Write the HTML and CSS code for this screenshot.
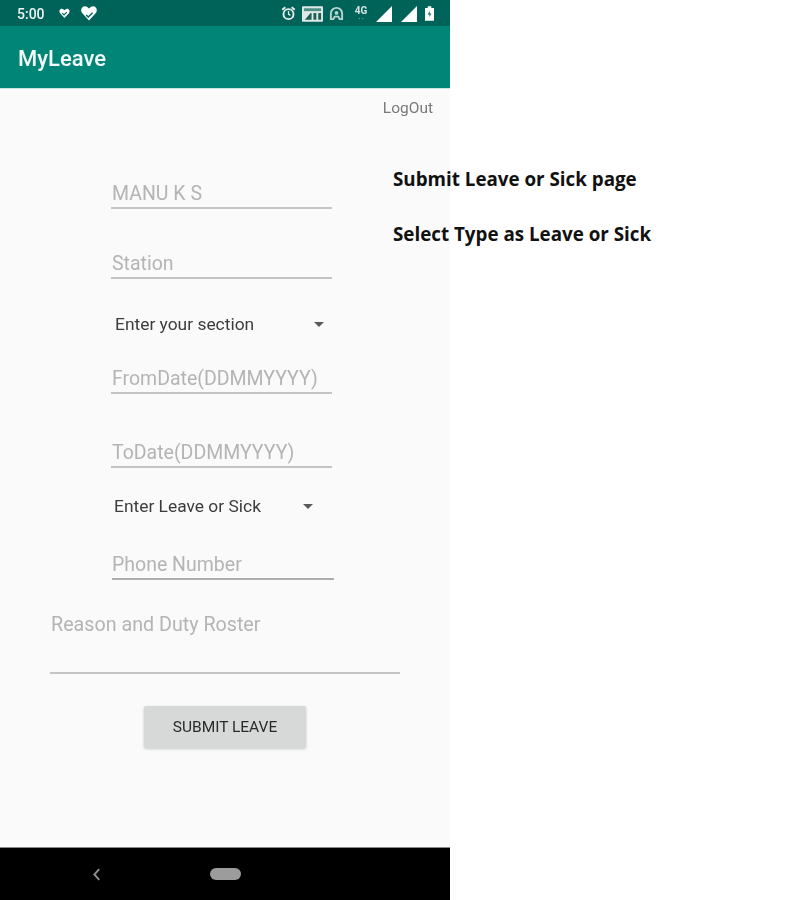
FILE: index.html
```html
<!DOCTYPE html>
<html lang="en">
<head>
<meta charset="utf-8">
<title>MyLeave</title>
<link rel="stylesheet" href="styles.css">
</head>
<body>
<div class="page">
  <div class="phone">
    <header class="status">
      <span class="time">5:00</span>
      <svg class="ic heart-s" viewBox="0 0 24 24"><path fill="#fff" d="M12 22 2 11C-1 6 3 1 7.500 2c2 .4 3.500 1.500 4.500 3 1-1.500 2.500-2.600 4.500-3C21 1 25 6 22 11z"/><path fill="none" stroke="#00665a" stroke-width="2.500" d="m7 11 4 4 6-6"/></svg>
      <svg class="ic heart-l" viewBox="0 0 24 24"><path fill="#fff" d="M12 22 2 11C-1 6 3 1 7.500 2c2 .4 3.500 1.500 4.500 3 1-1.500 2.500-2.600 4.500-3C21 1 25 6 22 11z"/><path fill="none" stroke="#00665a" stroke-width="2" d="m8 14 3 3 6-6"/></svg>
      <span class="status-right">
        <svg class="ic i14" viewBox="0 0 24 24"><circle cx="12" cy="13" r="8" fill="none" stroke="#e6efed" stroke-width="3"/><path d="M12 8v5l3 2" fill="none" stroke="#e6efed" stroke-width="2"/><path d="M2 6l5-4M22 6l-5-4" stroke="#e6efed" stroke-width="3"/></svg>
        <svg class="ic vpn" viewBox="0 0 22 16"><rect width="22" height="16" rx="1" fill="#dfe9e7"/><rect x="2" y="2" width="18" height="3" fill="#4d8f85"/><path d="M3 14 9 7h1v7z" fill="#1d5f55"/><rect x="12" y="7" width="3" height="7" fill="#1d5f55"/><rect x="17" y="7" width="3" height="7" fill="#1d5f55"/></svg>
        <svg class="ic i14 game" viewBox="0 0 24 24"><path d="M3 21V12a9 9 0 0 1 18 0v9h-4l-2-4H9l-2 4z" fill="none" stroke="#b9d3cf" stroke-width="3"/><circle cx="12" cy="11" r="3" fill="#b9d3cf"/></svg>
        <span class="net"><b>4G</b><i>&#8226; &#8226;</i></span>
        <svg class="ic sig" viewBox="0 0 16 16"><path fill="#fff" d="M16 0v16H0z"/></svg>
        <svg class="ic sig" viewBox="0 0 16 16"><path fill="#fff" d="M16 0v16H0z"/></svg>
        <svg class="ic batt" viewBox="0 0 10 16"><path fill="#fff" d="M3 0h4v2h3v14H0V2h3z"/><path fill="#00665a" d="M5.500 5 3 9h2v3l2-4H5z"/></svg>
      </span>
    </header>
    <div class="appbar">MyLeave</div>
    <main class="content">
      <a class="logout">LogOut</a>
      <div class="field f-name"><span>MANU K S</span></div>
      <div class="field f-station"><span>Station</span></div>
      <div class="spinner s-section"><span>Enter your section</span><i class="caret"></i></div>
      <div class="field f-from"><span>FromDate(DDMMYYYY)</span></div>
      <div class="field f-to"><span>ToDate(DDMMYYYY)</span></div>
      <div class="spinner s-type"><span>Enter Leave or Sick</span><i class="caret"></i></div>
      <div class="field f-phone"><span>Phone Number</span></div>
      <div class="field f-reason"><span>Reason and Duty Roster</span></div>
      <button class="submit">SUBMIT LEAVE</button>
    </main>
    <footer class="nav">
      <svg class="back" viewBox="0 0 8 12"><path d="M6.500 1 2 6l4.500 5" fill="none" stroke="#8f8f8f" stroke-width="1.800"/></svg>
      <span class="home"></span>
    </footer>
  </div>
  <div class="note">
    <p>Submit Leave or Sick page</p>
    <p>Select Type as Leave or Sick</p>
  </div>
</div>
</body>
</html>
```
FILE: styles.css
```css
html, body { margin: 0; padding: 0; background: #fff; }
.page { position: relative; width: 810px; height: 900px; overflow: hidden; font-family: Roboto, "Liberation Sans", sans-serif; }
.phone { width: 450px; height: 900px; display: flex; flex-direction: column; filter: blur(.4px); }

.status { height: 26px; flex: none; background: #00635a; display: flex; align-items: center; padding: 1px 17px 0; color: #eef5f4; box-sizing: border-box; }
.time { font-size: 14px; font-weight: 500; margin-right: 13px; }
.ic { display: block; flex: none; }
.heart-s { width: 13px; height: 11px; margin-right: 8px; }
.heart-l { width: 20px; height: 17px; }
.status-right { margin-left: auto; margin-right: -1px; display: flex; align-items: center; gap: 7px; }
.i14 { width: 15px; height: 15px; }
.vpn { width: 21px; height: 16px; margin-left: -1px; }
.game { margin-left: -1px; }
.net { display: flex; flex-direction: column; align-items: center; line-height: 8px; width: 14px; margin: 2px 1px 0 3px; }
.net b { font-size: 10px; font-weight: 700; color: #d5e5e2; }
.net i { font-size: 6px; font-style: normal; color: #7fb0a8; }
.sig { width: 16px; height: 16px; margin-right: 2px; }
.batt { width: 9px; height: 15px; margin-left: -1px; }

.appbar { height: 62px; flex: none; background: #008577; color: #f2f9f8; font-size: 22px; font-weight: 500; line-height: 65px; padding-left: 18px; box-sizing: border-box; }

.content { flex: 1; background: #fafafa; display: flex; flex-direction: column; align-items: flex-start; padding-left: 111px; box-shadow: inset 0 1px 0 #c7e6e2; }
.logout { align-self: flex-end; margin: 11px 17px 0 0; font-size: 15.500px; line-height: 18px; color: #7a7a7a; }

.field { box-sizing: border-box; width: 221px; height: 31px; border-bottom: 2px solid #c4c4c4; font-size: 19.500px; line-height: 32px; color: #b4b4b4; flex: none; padding-left: 1px; }
.f-name { margin-top: 61px; }
.f-station { margin-top: 39px; }
.f-from { margin-top: 28px; }
.f-to { margin-top: 43px; }
.f-phone { margin-top: 32px; width: 222px; border-bottom-color: #aeaeae; margin-left: 1px; padding-left: 0; }
.f-reason { margin: 27px 0 0 -61px; width: 350px; height: 67px; padding-top: 2px; font-size: 19.700px; border-bottom-color: #c4c4c4; }

.spinner { display: flex; align-items: center; font-size: 17.400px; line-height: 22px; color: #3c3c3c; height: 22px; flex: none; }
.s-section { margin: 34px 0 0 4px; width: 209px; justify-content: space-between; }
.s-type { margin: 27px 0 0 3px; width: 199px; justify-content: space-between; }
.caret { width: 0; height: 0; border: 5px solid transparent; border-top: 5px solid #5a5a5a; border-bottom: 0; }

.submit { align-self: flex-start; margin: 32px 0 0 33px; width: 162px; height: 42px; border: 0; border-radius: 2px; background: #d7d9d8; color: #2a2a2a; font-family: inherit; font-size: 15.500px; padding: 0; box-shadow: 0 1px 3px rgba(0,0,0,.2); }

.nav { height: 52px; flex: none; background: #000; display: flex; align-items: center; padding-left: 92px; box-shadow: 0 -1px 0 #888; }
.back { width: 9px; height: 13px; }
.home { width: 31px; height: 12px; border-radius: 6px; background: #9c9c9c; margin-left: 109px; }

.note { position: absolute; left: 393px; top: 167px; font-family: "Open Sans", "Noto Sans", sans-serif; font-weight: 700; font-size: 18.800px; color: #111; }
.note p { margin: 0 0 30px; line-height: 25px; }
```
